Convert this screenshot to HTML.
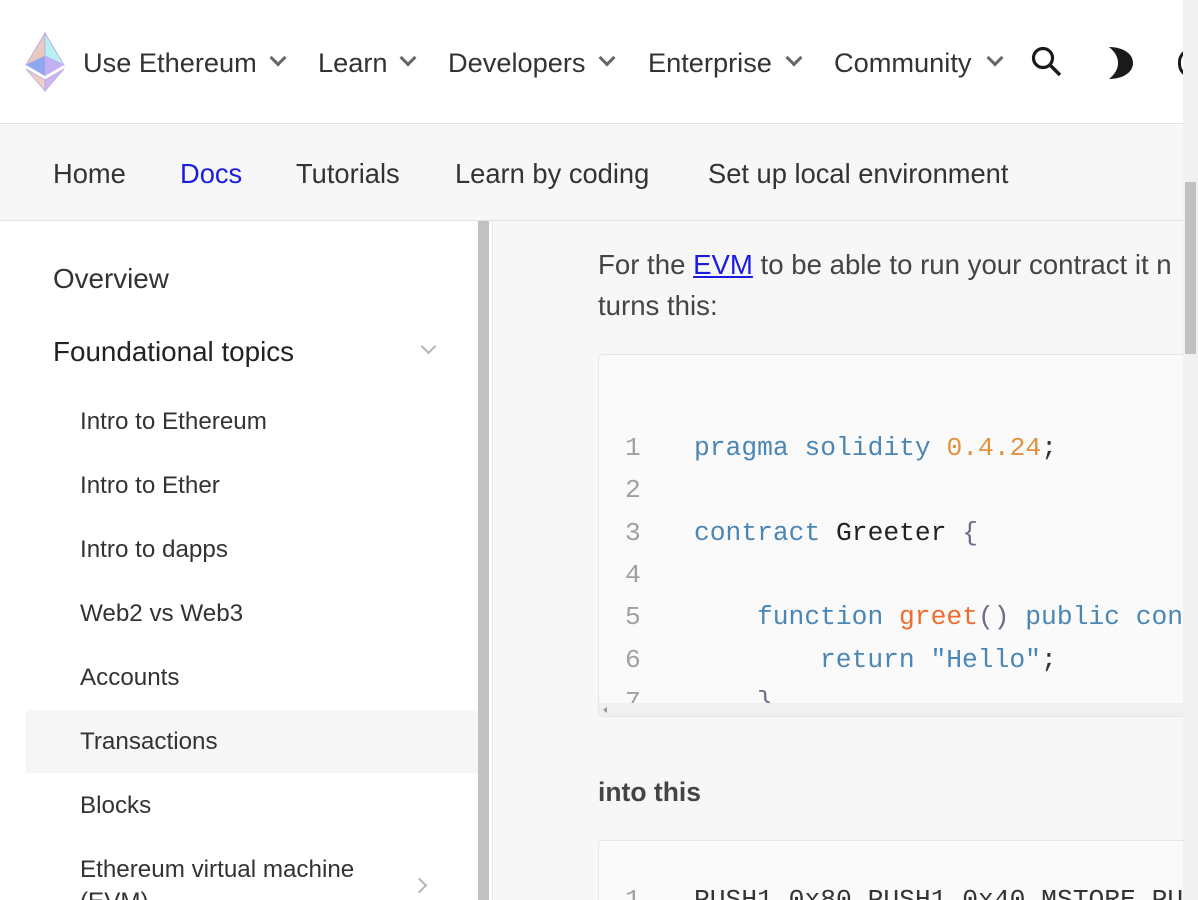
<!DOCTYPE html>
<html style="overflow:hidden;height:900px"><head><meta charset="utf-8"><style>
*{margin:0;padding:0;box-sizing:border-box}
body{width:1198px;height:900px;overflow:hidden;position:relative;background:#fff;font-family:"Liberation Sans",sans-serif;color:#333}
.a{position:absolute;white-space:nowrap;line-height:1}
.nav{font-size:27.2px;color:#333;top:49px}
.chev{position:absolute;width:12px;height:12px;border-right:3px solid #666;border-bottom:3px solid #666;transform:rotate(45deg)}
.sub{font-size:27.3px;top:160px;color:#333}
.side{font-size:24.2px;color:#333;left:80px}
.mono{font-family:"Liberation Mono","DejaVu Sans Mono",monospace;font-size:26.3px;line-height:1}
.kw{color:#4b86b4}.num{color:#e0923e}.fn{color:#f26b2e}.ln{color:#a0a0a0}.br{color:#6c6c8c}
</style></head><body>
<div style="position:absolute;left:0;top:0;width:1198px;height:124px;background:#fff;border-bottom:1px solid #e2e2e2"></div>
<svg class="a" style="left:24px;top:32px" width="42" height="60" viewBox="0 0 42 60">
<polygon points="21,1 2,33 21,24" fill="#e8cbbf" stroke="#b9a6e6" stroke-width="0.8"/>
<polygon points="21,1 40,33 21,24" fill="#b9f0f2" stroke="#b9a6e6" stroke-width="0.8"/>
<polygon points="2,33 21,24 21,44" fill="#8fa7ee"/>
<polygon points="40,33 21,24 21,44" fill="#c4b0f0"/>
<polygon points="2,37 21,48 21,59" fill="#ecd0c2" stroke="#b9a6e6" stroke-width="0.8"/>
<polygon points="40,37 21,48 21,59" fill="#cdb6f2" stroke="#b9a6e6" stroke-width="0.8"/>
</svg>
<div class="a nav" style="left:83px">Use Ethereum</div><div class="chev" style="left:272px;top:52px"></div>
<div class="a nav" style="left:318px">Learn</div><div class="chev" style="left:402px;top:52px"></div>
<div class="a nav" style="left:448px">Developers</div><div class="chev" style="left:601px;top:52px"></div>
<div class="a nav" style="left:648px">Enterprise</div><div class="chev" style="left:788px;top:52px"></div>
<div class="a nav" style="left:834px">Community</div><div class="chev" style="left:989px;top:52px"></div>
<svg class="a" style="left:1030px;top:45px" width="34" height="34" viewBox="0 0 34 34"><circle cx="13" cy="13" r="9.5" fill="none" stroke="#1a1a1a" stroke-width="3.2"/><line x1="20" y1="20" x2="30" y2="30" stroke="#1a1a1a" stroke-width="3.4"/></svg>
<svg class="a" style="left:1108px;top:46px" width="28" height="34" viewBox="0 0 28 34"><path d="M1 1 C14 1 25 7 25 17 C25 27 14 33 1 33 C7 28 10 23 10 17 C10 11 7 6 1 1Z" fill="#1a1a1a"/></svg>
<div class="a" style="left:1178px;top:48px;width:14px;height:30px;border-radius:15px 0 0 15px;border:3px solid #1a1a1a;border-right:none"></div>
<div style="position:absolute;left:0;top:125px;width:1198px;height:96px;background:#f7f7f7;border-bottom:1px solid #e2e2e2"></div>
<div class="a sub" style="left:53px">Home</div>
<div class="a sub" style="left:180px;color:#1c1ce1">Docs</div>
<div class="a sub" style="left:296px">Tutorials</div>
<div class="a sub" style="left:455px">Learn by coding</div>
<div class="a sub" style="left:708px">Set up local environment</div>
<div style="position:absolute;left:0;top:221px;width:478px;height:679px;background:#fff"></div>
<div style="position:absolute;left:478px;top:221px;width:11px;height:679px;background:#c1c1c1"></div>
<div style="position:absolute;left:489px;top:221px;width:4px;height:679px;background:#fff;border-right:1px solid #e4e4e4"></div>
<div class="a" style="left:53px;top:265px;font-size:27.8px">Overview</div>
<div class="a" style="left:53px;top:338px;font-size:27.8px;color:#222">Foundational topics</div>
<div class="chev" style="left:423px;top:341px;border-color:#b5b5b5;border-width:2.5px;width:11px;height:11px"></div>
<div style="position:absolute;left:26px;top:710px;width:452px;height:63px;background:#f6f6f6"></div>
<div class="a side" style="top:410px">Intro to Ethereum</div>
<div class="a side" style="top:474px">Intro to Ether</div>
<div class="a side" style="top:538px">Intro to dapps</div>
<div class="a side" style="top:602px">Web2 vs Web3</div>
<div class="a side" style="top:666px">Accounts</div>
<div class="a side" style="top:730px">Transactions</div>
<div class="a side" style="top:794px">Blocks</div>
<div class="a side" style="top:858px">Ethereum virtual machine</div>
<div class="a side" style="top:890px">(EVM)</div>
<div class="chev" style="left:414px;top:880px;border-color:#b5b5b5;border-width:2.5px;width:11px;height:11px;transform:rotate(-45deg)"></div>
<div style="position:absolute;left:494px;top:221px;width:689px;height:679px;background:#f7f7f7"></div>
<div class="a" style="left:598px;top:251px;font-size:27.6px;color:#444">For the <span style="color:#1c1ce1;text-decoration:underline">EVM</span> to be able to run your contract it n</div>
<div class="a" style="left:598px;top:292px;font-size:27.6px;color:#444">turns this:</div>
<div style="position:absolute;left:598px;top:354px;width:600px;height:363px;background:#fafafa;border:1px solid #e6e6e6;border-radius:4px;overflow:hidden">
 <div class="mono" style="position:absolute;left:0;top:80px">
  <div class="a ln" style="left:26px;top:0">1</div><div class="a" style="left:95px;top:0"><span class="kw">pragma solidity</span> <span class="num">0.4.24</span>;</div>
  <div class="a ln" style="left:26px;top:42px">2</div>
  <div class="a ln" style="left:26px;top:85px">3</div><div class="a" style="left:95px;top:85px"><span class="kw">contract</span> <span style="color:#222">Greeter</span> <span class="br">{</span></div>
  <div class="a ln" style="left:26px;top:127px">4</div>
  <div class="a ln" style="left:26px;top:169px">5</div><div class="a" style="left:158px;top:169px"><span class="kw">function</span> <span class="fn">greet</span><span class="br">()</span> <span class="kw">public con</span></div>
  <div class="a ln" style="left:26px;top:212px">6</div><div class="a" style="left:221px;top:212px"><span class="kw">return "Hello"</span>;</div>
  <div class="a ln" style="left:26px;top:254px">7</div><div class="a br" style="left:158px;top:254px">}</div>
 </div>
 <div style="position:absolute;left:0;top:348px;width:600px;height:15px;background:#f0f0f0"></div>
 <div style="position:absolute;left:4px;top:352px;width:0;height:0;border-top:3px solid transparent;border-bottom:3px solid transparent;border-right:4px solid #999"></div>
</div>
<div class="a" style="left:598px;top:779px;font-size:26.5px;font-weight:bold;color:#444">into this</div>
<div style="position:absolute;left:598px;top:840px;width:600px;height:60px;background:#fafafa;border:1px solid #e6e6e6;border-bottom:none;border-radius:4px 4px 0 0;overflow:hidden">
 <div class="mono" style="position:absolute;top:46px;left:0">
  <div class="a ln" style="left:26px">1</div><div class="a" style="left:95px;color:#333">PUSH1 0x80 PUSH1 0x40 MSTORE PU</div>
 </div>
</div>
<div style="position:absolute;left:1183px;top:0;width:15px;height:900px;background:#f1f1f1"></div>
<div style="position:absolute;left:1185px;top:182px;width:11px;height:172px;background:#c1c1c1"></div>
</body></html>
